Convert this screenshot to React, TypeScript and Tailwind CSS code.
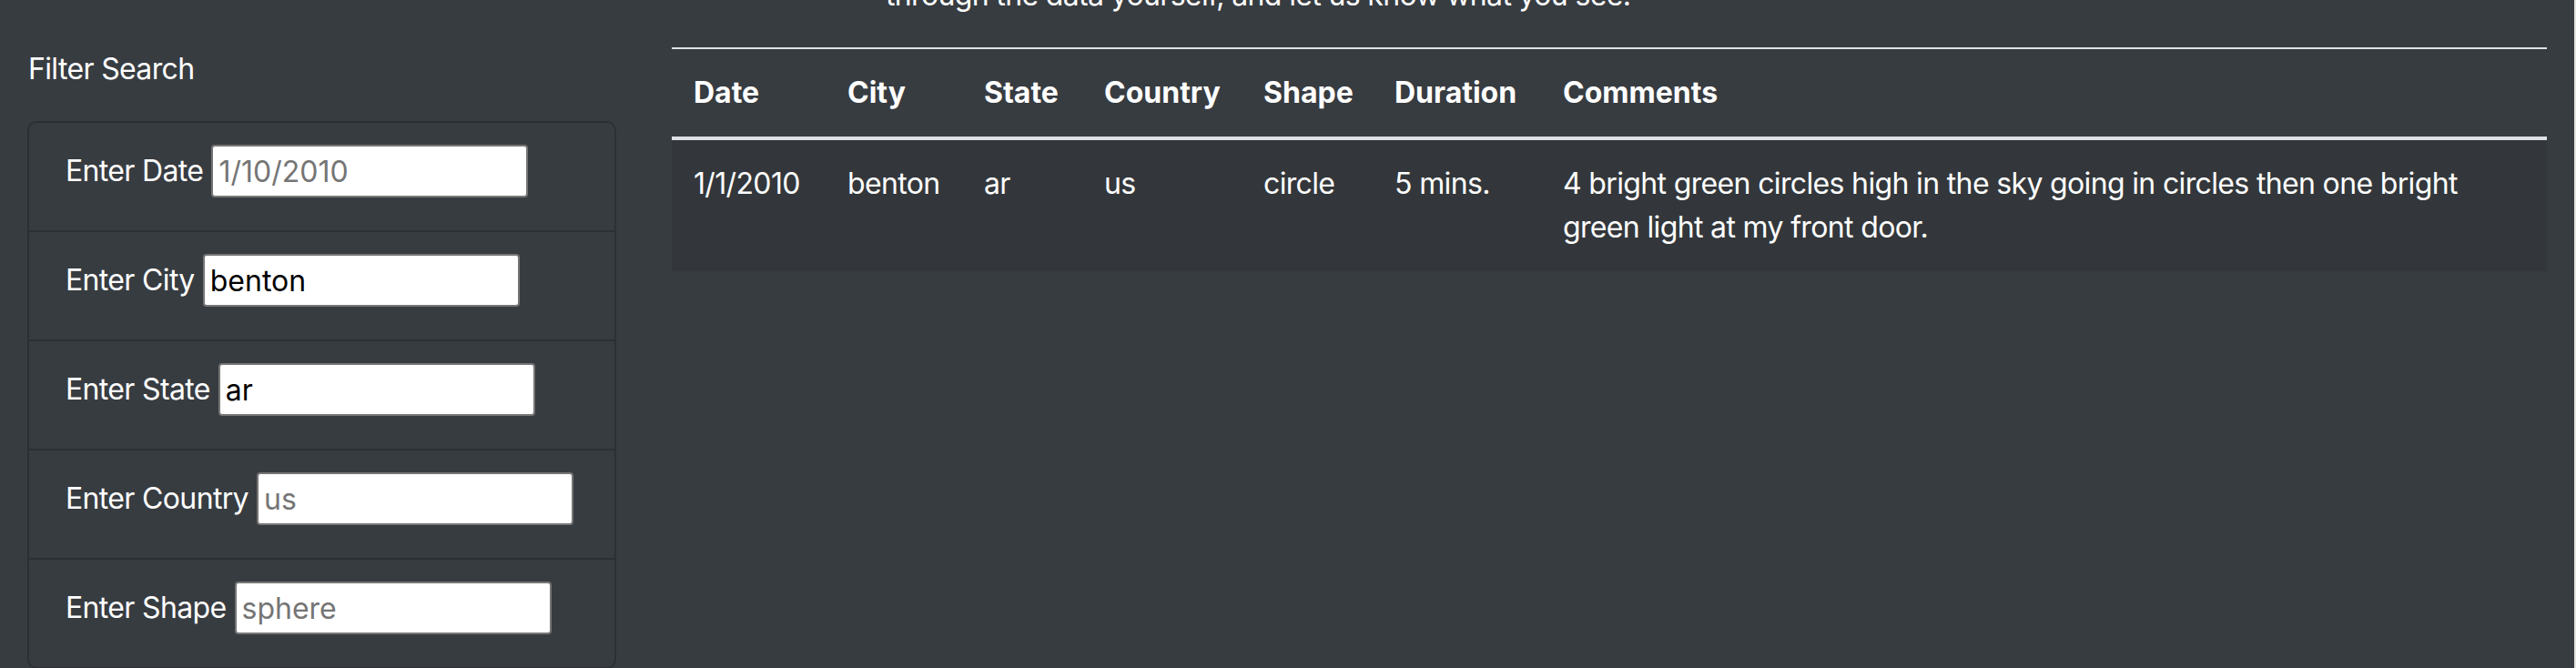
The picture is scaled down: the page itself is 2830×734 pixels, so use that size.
import React from "react";

const filters = [
  { label: "Enter Date", value: "", placeholder: "1/10/2010" },
  { label: "Enter City", value: "benton", placeholder: "" },
  { label: "Enter State", value: "ar", placeholder: "" },
  { label: "Enter Country", value: "", placeholder: "us" },
  { label: "Enter Shape", value: "", placeholder: "sphere" },
];

const columns = [
  { name: "Date", width: "w-[169px]" },
  { name: "City", width: "w-[150px]" },
  { name: "State", width: "w-[132px]" },
  { name: "Country", width: "w-[175px]" },
  { name: "Shape", width: "w-[144px]" },
  { name: "Duration", width: "w-[185px]" },
  { name: "Comments", width: "" },
];

const sightings = [
  {
    date: "1/1/2010",
    city: "benton",
    state: "ar",
    country: "us",
    shape: "circle",
    duration: "5 mins.",
    comments:
      "4 bright green circles high in the sky going in circles then one bright green light at my front door.",
  },
];

export default function App() {
  return (
    <div className="h-[734px] overflow-hidden border-r-2 border-[#e3e3e3] bg-[#373c41] font-[family-name:Inter,'Noto_Sans',sans-serif] text-[32px] leading-[48px] tracking-[-0.65px] text-white">
      {/* tail of the intro paragraph, scrolled mostly out of view */}
      <div className="h-[52px] overflow-hidden pl-[973px]">
        <p className="-mt-[29px] whitespace-nowrap">
          through the data yourself, and let us know what you see.
        </p>
      </div>

      <div className="flex">
        <aside className="w-[707px] shrink-0 pl-[30px] pr-[30px]">
          <h5 className="pl-[1px] leading-[48px]">Filter Search</h5>
          <ul className="mt-[33px] rounded-[10px] border-2 border-[#2c3034]">
            {filters.map((f, i) => (
              <li
                key={f.label}
                className={
                  i === 0
                    ? "flex items-center gap-[9px] px-[40px] pt-[24px] pb-[36px]"
                    : "flex items-center gap-[9px] border-t-2 border-[#2c3034] px-[40px] pt-[24px] pb-[36px]"
                }
              >
                <label className="whitespace-nowrap">{f.label}</label>
                <input
                  type="text"
                  defaultValue={f.value}
                  placeholder={f.placeholder}
                  className="h-[58px] w-[348px] rounded-[4px] border-2 border-[#767676] bg-white px-[6px] text-[32px] tracking-normal text-black placeholder:text-[#757575]"
                />
              </li>
            ))}
          </ul>
        </aside>

        <main className="flex-1 pl-[31px] pr-[30px]">
          <table className="w-full table-fixed border-collapse text-left">
            <colgroup>
              {columns.map((c) => (
                <col key={c.name} className={c.width} />
              ))}
            </colgroup>
            <thead>
              <tr>
                {columns.map((c) => (
                  <th
                    key={c.name}
                    className="border-t-2 border-b-4 border-[#dee2e6] p-[24px] font-bold tracking-normal"
                  >
                    {c.name}
                  </th>
                ))}
              </tr>
            </thead>
            <tbody>
              {sightings.map((s) => (
                <tr key={s.date + s.city} className="bg-[#33373b]">
                  <td className="p-[24px] align-top">{s.date}</td>
                  <td className="p-[24px] align-top">{s.city}</td>
                  <td className="p-[24px] align-top">{s.state}</td>
                  <td className="p-[24px] align-top">{s.country}</td>
                  <td className="p-[24px] align-top">{s.shape}</td>
                  <td className="p-[24px] align-top">{s.duration}</td>
                  <td className="p-[24px] align-top">{s.comments}</td>
                </tr>
              ))}
            </tbody>
          </table>
        </main>
      </div>
    </div>
  );
}
